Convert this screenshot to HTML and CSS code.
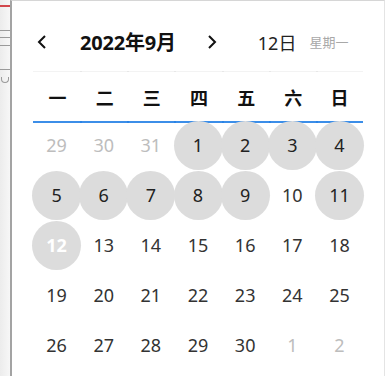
FILE: index.html
```html
<!DOCTYPE html>
<html lang="zh-CN">
<head>
    <meta charset="UTF-8">
    <meta name="viewport" content="width=device-width, initial-scale=1.0">
    <title>日期选择</title>
    <link rel="stylesheet" href="styles.css">
</head>
<body>
    <div class="screen">
        <div class="backdrop">
            <span class="mark mark-red"></span>
            <span class="mark mark-a"></span>
            <span class="mark mark-b"></span>
            <span class="mark mark-c"></span>
            <span class="mark mark-d"></span>
            <span class="hook"></span>
        </div>
        <div class="picker">
            <div class="picker-head">
                <button class="nav prev" aria-label="上个月">
                    <svg width="10" height="16" viewBox="0 0 10 16"><polyline points="8,2 2,8 8,14" fill="none" stroke="#111" stroke-width="2"/></svg>
                </button>
                <span class="month">2022年9月</span>
                <button class="nav next" aria-label="下个月">
                    <svg width="10" height="16" viewBox="0 0 10 16"><polyline points="2,2 8,8 2,14" fill="none" stroke="#111" stroke-width="2"/></svg>
                </button>
                <span class="today">12日</span>
                <span class="weekday">星期一</span>
            </div>
            <div class="week">
                <span>一</span><span>二</span><span>三</span><span>四</span><span>五</span><span>六</span><span>日</span>
            </div>
            <div class="days" id="days"></div>
        </div>
    </div>
    <script>
        // 2022年9月, 周一开头
        const marked = [1, 2, 3, 4, 5, 6, 7, 8, 9, 11];
        const selected = 12;
        const cells = [];
        [29, 30, 31].forEach(d => cells.push({ d: d, other: true }));
        for (let d = 1; d <= 30; d++) cells.push({ d: d });
        [1, 2].forEach(d => cells.push({ d: d, other: true }));

        const days = document.getElementById('days');
        cells.forEach(c => {
            const cell = document.createElement('div');
            cell.className = 'day';
            const num = document.createElement('span');
            num.className = 'num';
            if (c.other) num.classList.add('other');
            else if (c.d === selected) num.classList.add('selected');
            else if (marked.includes(c.d)) num.classList.add('marked');
            num.textContent = c.d;
            cell.appendChild(num);
            days.appendChild(cell);
        });
    </script>
</body>
</html>
```

FILE: styles.css
```css
* {
    box-sizing: border-box;
}
html, body {
    margin: 0;
    height: 100%;
    background: #fff;
}
body {
    font-family: "Noto Sans", "Noto Sans CJK SC", sans-serif;
    color: #333;
    overflow: hidden;
}
.screen {
    display: flex;
    height: 100%;
}
.backdrop {
    position: relative;
    width: 10px;
    flex-shrink: 0;
    background: linear-gradient(to right, #ececec, #f7f7f7);
}
.mark {
    position: absolute;
    left: 0;
    width: 10px;
    height: 1px;
    background: #9a9a9a;
}
.mark-red { top: 5px; height: 2px; background: #d2474c; }
.mark-a { top: 30px; }
.mark-b { top: 37px; }
.mark-c { top: 45px; }
.mark-d { top: 69px; }
.hook {
    position: absolute;
    top: 77px;
    left: 1px;
    width: 8px;
    height: 6px;
    border: 1px solid #9a9a9a;
    border-top: none;
    border-radius: 0 0 5px 5px;
}
.picker {
    width: 375px;
    flex-shrink: 0;
    background: #fff;
    border-left: 2px solid #a3a3a3;
    border-top: 1px solid #d6d6d6;
    border-right: 1px solid #e4e4e4;
    padding: 0 21px 0 21px;
}
.picker-head {
    display: flex;
    align-items: center;
    height: 70px;
    padding-top: 11px;
}
.nav {
    display: flex;
    align-items: center;
    justify-content: center;
    width: 18px;
    height: 24px;
    padding: 0;
    border: none;
    background: none;
    cursor: pointer;
}
.month {
    margin-left: 29px;
    font-size: 20px;
    font-weight: 700;
    color: #111;
    letter-spacing: -0.2px;
}
.next {
    margin-left: 27px;
}
.today {
    margin-left: 37px;
    font-size: 18px;
    color: #222;
}
.weekday {
    margin-left: 13px;
    font-size: 13px;
    color: #a8a8a8;
}
.week {
    display: grid;
    grid-template-columns: repeat(7, minmax(0, 1fr));
}
.week span {
    height: 52px;
    margin-right: -2px;
    display: flex;
    align-items: center;
    justify-content: center;
    font-size: 18px;
    font-weight: 700;
    color: #111;
    border-top: 1px solid rgba(0, 0, 0, 0.05);
    border-bottom: 2px solid rgba(40, 130, 230, 0.9);
}
.week span:last-child {
    margin-right: 0;
}
.days {
    display: grid;
    grid-template-columns: repeat(7, minmax(0, 1fr));
    grid-auto-rows: 50px;
    margin-top: -3px;
}
.day {
    display: flex;
    align-items: center;
    justify-content: center;
}
.num {
    flex-shrink: 0;
    display: flex;
    align-items: center;
    justify-content: center;
    width: 49px;
    height: 49px;
    border-radius: 50%;
    font-size: 18px;
    color: #333;
}
.num.other {
    color: #bdbdbd;
}
.num.marked {
    background: #dcdcdc;
    color: #222;
}
.num.selected {
    background: #dcdcdc;
    color: #fff;
    font-weight: 700;
}
```
